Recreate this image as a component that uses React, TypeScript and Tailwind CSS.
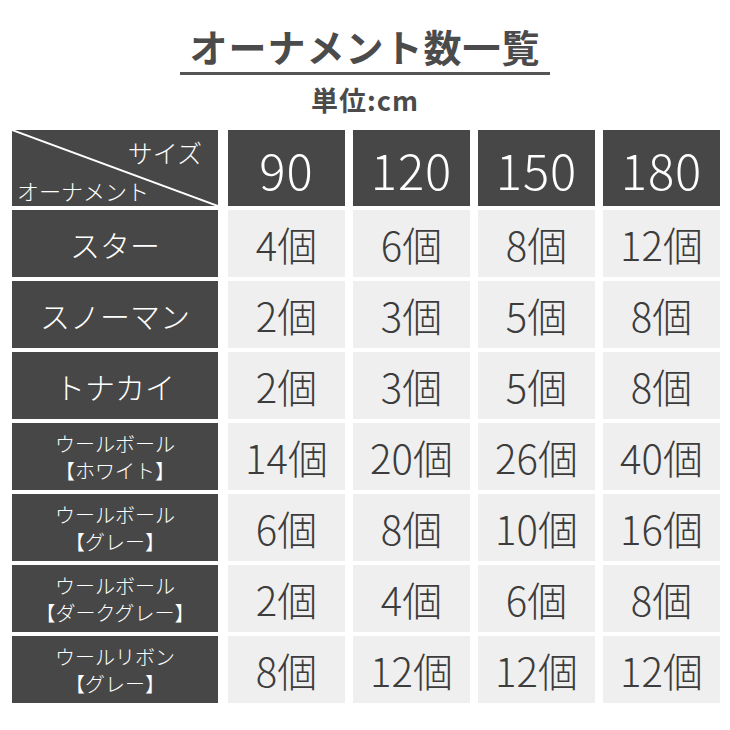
const SIZES = ['90', '120', '150', '180'];

type Row = { label: string[]; small?: boolean; counts: string[] };

const ROWS: Row[] = [
  { label: ['スター'], counts: ['4', '6', '8', '12'] },
  { label: ['スノーマン'], counts: ['2', '3', '5', '8'] },
  { label: ['トナカイ'], counts: ['2', '3', '5', '8'] },
  { label: ['ウールボール', '【ホワイト】'], small: true, counts: ['14', '20', '26', '40'] },
  { label: ['ウールボール', '【グレー】'], small: true, counts: ['6', '8', '10', '16'] },
  { label: ['ウールボール', '【ダークグレー】'], small: true, counts: ['2', '4', '6', '8'] },
  { label: ['ウールリボン', '【グレー】'], small: true, counts: ['8', '12', '12', '12'] },
];

const font = { fontFamily: '"Noto Sans CJK JP", "Noto Sans", sans-serif' };

function CornerCell() {
  return (
    <div className="relative h-full w-[206px] mr-[10px] bg-[#474747]">
      <svg className="absolute inset-0" width="206" height="76" viewBox="0 0 206 76">
        <line x1="0" y1="0" x2="206" y2="76" stroke="#ffffff" strokeWidth="2" />
      </svg>
      <span className="absolute right-[16px] top-[8px] text-[25px] leading-[28px] text-white font-light">
        サイズ
      </span>
      <span className="absolute left-[5px] bottom-[3px] text-[22px] leading-[26px] text-white font-light">
        オーナメント
      </span>
    </div>
  );
}

export default function App() {
  return (
    <div className="w-[730px] h-[730px] bg-white overflow-hidden" style={font}>
      <div className="flex flex-col items-center pt-[23px]">
        <h1 className="text-[38px] font-bold leading-[46px] tracking-[1px] text-[#4b4b4b]">
          オーナメント数一覧
        </h1>
        <div className="mt-[3px] h-[3px] w-[370px] bg-[#555555]" />
        <div className="mt-[9px] text-[27px] font-bold leading-[32px] tracking-[1px] text-[#4b4b4b]">
          単位:cm
        </div>
      </div>

      <div className="ml-[12px] mt-[14px] flex flex-col gap-[4px]">
        <div className="flex h-[76px]">
          <CornerCell />
          <div className="flex gap-[8px]">
            {SIZES.map((s) => (
              <div
                key={s}
                className="flex h-[76px] w-[117px] items-center justify-center bg-[#474747] text-[49px] font-light tracking-[1px] text-white leading-none"
              >
                {s}
              </div>
            ))}
          </div>
        </div>

        {ROWS.map((row) => (
          <div key={row.label.join('')} className="flex h-[67px]">
            <div className="mr-[10px] flex w-[206px] flex-col items-center justify-center bg-[#474747] text-white font-light">
              {row.small ? (
                row.label.map((l) => (
                  <span key={l} className="text-[20px] leading-[27px]">
                    {l}
                  </span>
                ))
              ) : (
                <span className="text-[30px] leading-none">{row.label[0]}</span>
              )}
            </div>
            <div className="flex gap-[8px]">
              {row.counts.map((c, i) => (
                <div
                  key={i}
                  className="flex w-[117px] items-center justify-center bg-[#efefef] text-[40px] font-light text-[#3c3c3c] leading-none"
                >
                  {c}個
                </div>
              ))}
            </div>
          </div>
        ))}
      </div>
    </div>
  );
}
